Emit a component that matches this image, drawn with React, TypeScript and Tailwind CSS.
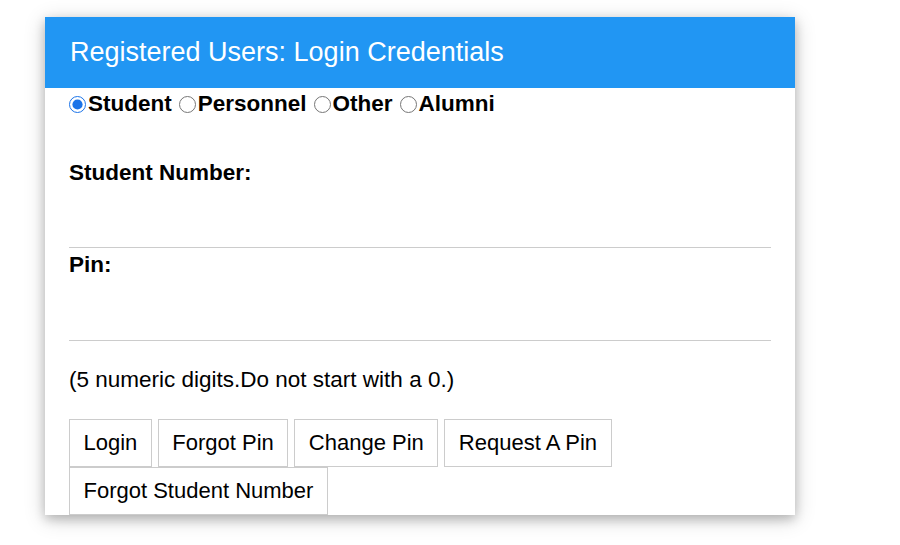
import { useState } from "react";

const roles = ["Student", "Personnel", "Other", "Alumni"];
const buttons = ["Login", "Forgot Pin", "Change Pin", "Request A Pin", "Forgot Student Number"];

export default function App() {
  const [role, setRole] = useState("Student");

  return (
    <div className="min-h-[545px] bg-white pt-[17px] pl-[45px] font-['Liberation_Sans',Arial,sans-serif] text-black">
      <div className="w-[750px] bg-white shadow-[0_4px_10px_0_rgba(0,0,0,0.2),0_4px_20px_0_rgba(0,0,0,0.19)]">
        <header className="h-[71px] bg-[#2196f3] px-[25px] flex items-center">
          <h2 className="text-[27px] text-white leading-none">Registered Users: Login Credentials</h2>
        </header>
        <form className="px-6" onSubmit={(e) => e.preventDefault()}>
          <div className="h-[33px] flex items-center text-[22.5px] font-bold leading-none">
            {roles.map((r) => (
              <label key={r} className="flex items-center mr-[7px] cursor-pointer">
                <input
                  type="radio"
                  name="role"
                  checked={role === r}
                  onChange={() => setRole(r)}
                  className="m-0 mr-[2px] w-[17px] h-[17px] accent-[#1a73e8]"
                />
                {r}
              </label>
            ))}
          </div>

          <label className="block mt-[39px] text-[22.5px] font-bold leading-[26px]">Student Number:</label>
          <input className="block w-full h-[62px] border-b border-[#ccc] outline-none" />

          <label className="block mt-[4px] text-[22.5px] font-bold leading-[26px]">Pin:</label>
          <input type="password" className="block w-full h-[63px] border-b border-[#ccc] outline-none" />

          <p className="mt-[26px] text-[22.5px] leading-[26px]">(5 numeric digits.Do not start with a 0.)</p>

          <div className="mt-[26px] flex flex-wrap gap-x-[6px]">
            {buttons.map((b) => (
              <button
                key={b}
                className="h-[48px] px-[13.5px] border border-[#ccc] bg-white text-[22px] leading-none hover:bg-[#ccc]"
              >
                {b}
              </button>
            ))}
          </div>
        </form>
      </div>
    </div>
  );
}
